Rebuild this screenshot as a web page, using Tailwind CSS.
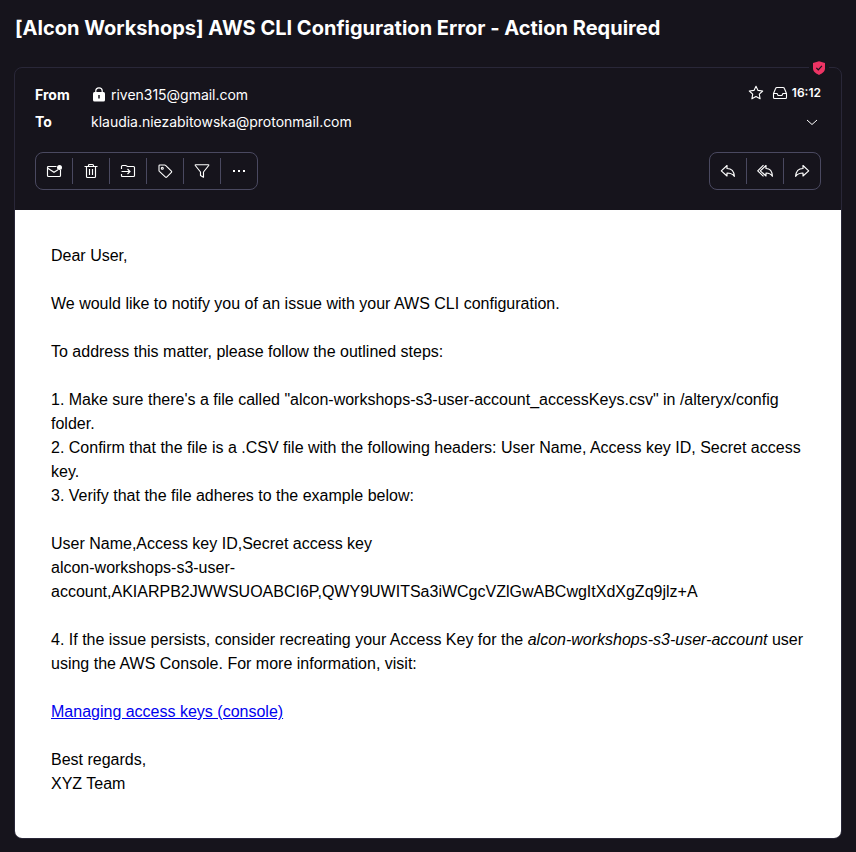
<!DOCTYPE html>
<html lang="en">
<head>
<meta charset="utf-8">
<title>Mail</title>
<script src="https://cdn.jsdelivr.net/npm/@tailwindcss/browser@4"></script>
</head>
<body class="bg-[#16141c] text-white font-['Inter',sans-serif] w-[856px] h-[852px] overflow-hidden">
<main class="pl-[14px] pr-[14px]">
  <h1 class="h-[67px] pt-[13px] pl-px text-[20px] leading-[30px] font-bold whitespace-nowrap tracking-[0.01px]">[Alcon Workshops] AWS CLI Configuration Error - Action Required</h1>
  <article class="relative h-[772px] w-[828px] border border-[#292738] rounded-lg flex flex-col">
    <div class="absolute right-[12px] -top-[8px] w-[20px] h-[16px] bg-[#16141c] flex justify-center">
      <svg class="w-[14px] h-[14px] mt-px" viewBox="0 0 14 14"><path d="M7 .2 13 2v5.600c0 3-2.600 5-6 6.400C3.600 12.600 1 10.600 1 7.600V2z" fill="#ed3464"/><path d="m4.300 6.900 2 1.900 3.600-3.900" fill="none" stroke="#16141c" stroke-width="1.200"/></svg>
    </div>
    <header class="h-[142px] px-[20px] pt-[13px] flex flex-col">
      <div class="flex h-[27px] items-center text-sm leading-[20px]">
        <span class="w-[56px] font-bold">From</span>
        <svg class="w-[16px] h-[16px] mr-[4px]" viewBox="0 0 16 16"><path d="M4.800 6V3.800a3.200 2.900 0 0 1 6.400 0V6" fill="none" stroke="#fff" stroke-width="1.200"/><rect x="2" y="5" width="12" height="9.500" rx="1.500" fill="#fff"/><path d="M8 8v3.500" stroke="#16141c" stroke-width="1.500"/></svg>
        <span class="tracking-[-0.02px]">riven315@gmail.com</span>
        <div class="ml-auto flex items-center h-[20px] -mt-[3px]">
          <svg class="w-[16px] h-[16px] mr-[8px]" viewBox="0 0 16 16" fill="none" stroke="#fff" stroke-width="1.100" stroke-linejoin="round"><path d="m8 1.200 2 4.200 4.700.6-3.400 3.200.8 4.600L8 11.600l-4.100 2.200.8-4.600L1.300 6 6 5.400z"/></svg>
          <svg class="w-[16px] h-[16px] mr-[4px]" viewBox="0 0 16 16" fill="none" stroke="#fff" stroke-width="1.100" stroke-linejoin="round"><path d="M1.500 8.500 3.700 3.300Q4 2.500 5 2.500h6q1 0 1.300.8l2.200 5.200v4q0 1-1 1h-11q-1 0-1-1zh3.600l1 2h3.800l1-2h3.600"/></svg>
          <span class="text-[12px] font-semibold">16:12</span>
        </div>
      </div>
      <div class="flex h-[27px] items-center text-sm leading-[20px]">
        <span class="w-[56px] font-bold">To</span>
        <span class="tracking-[-0.02px]">klaudia.niezabitowska@protonmail.com</span>
        <svg class="w-[16px] h-[16px] ml-auto mr-px" viewBox="0 0 16 16" fill="none" stroke="#fff"><path d="m3 6 5 4.500L13 6"/></svg>
      </div>
      <div class="flex justify-between mt-[17px]">
        <div class="flex h-[38px] items-center border border-[#4a4960] rounded-lg divide-x divide-[#4a4960]">
          <span class="w-[37px] h-[26px] flex items-center justify-center"><svg class="w-[16px] h-[16px]" viewBox="0 0 16 16" fill="none" stroke="#fff" stroke-width="1.150"><path d="M10.500 3.500h-8q-1 0-1 1v8q0 1 1 1h11q1 0 1-1V7M1.800 5.200 8 9.300l4-2.500"/><circle cx="13.500" cy="4.500" r="2.500" fill="#fff" stroke="none"/></svg></span>
          <span class="w-[37px] h-[26px] flex items-center justify-center"><svg class="w-[16px] h-[16px]" viewBox="0 0 16 16" fill="none" stroke="#fff" stroke-width="1.150"><path d="M1.500 3.500h13M5.500 3.500v-1q0-1 1-1h3q1 0 1 1v1M3.500 3.500v10q0 1 1 1h7q1 0 1-1v-10M6.500 6v6M9.500 6v6"/></svg></span>
          <span class="w-[37px] h-[26px] flex items-center justify-center"><svg class="w-[16px] h-[16px]" viewBox="0 0 16 16" fill="none" stroke="#fff" stroke-width="1.150"><path d="M1.500 6V3.500q0-1 1-1h3.300L7.500 3.500h6q1 0 1 1v8q0 1-1 1h-11q-1 0-1-1V11M1.500 8.500h8M7.500 6l2.500 2.500L7.500 11"/></svg></span>
          <span class="w-[37px] h-[26px] flex items-center justify-center"><svg class="w-[16px] h-[16px]" viewBox="0 0 16 16" fill="none" stroke="#fff" stroke-width="1.100" stroke-linejoin="round"><path d="M2 2.800q0-.8.800-.8h4.900q.5 0 .9.400l5.800 5.800q.6.600 0 1.200l-4.700 4.700q-.6.600-1.200 0L2.400 8.300Q2 7.900 2 7.400z"/><circle cx="5.300" cy="5.300" r="1"/></svg></span>
          <span class="w-[37px] h-[26px] flex items-center justify-center"><svg class="w-[16px] h-[16px]" viewBox="0 0 16 16" fill="none" stroke="#fff" stroke-width="1.150" stroke-linejoin="round"><path d="M1.300 2.500q-.3-.8.500-.8h12.400q.8 0 .5.800L9.500 9v5.200l-3-1.700V9z"/></svg></span>
          <span class="w-[36px] h-[26px] flex items-center justify-center"><svg class="w-[16px] h-[16px]" viewBox="0 0 16 16" fill="#fff"><path d="M2 7h2v2H2zM7 7h2v2H7zM12 7h2v2h-2z"/></svg></span>
        </div>
        <div class="flex h-[38px] items-center border border-[#4a4960] rounded-lg divide-x divide-[#4a4960]">
          <span class="w-[37px] h-[26px] flex items-center justify-center"><svg class="w-[16px] h-[16px]" viewBox="0 0 16 16" fill="none" stroke="#fff" stroke-width="1.150" stroke-linejoin="round"><path d="M7 2.500v3c4 0 7 2.500 7.400 7.800-1.600-2.200-4-3.300-7.400-3.300v3L1.300 7.800z"/></svg></span>
          <span class="w-[37px] h-[26px] flex items-center justify-center"><svg class="w-[16px] h-[16px]" viewBox="0 0 16 16" fill="none" stroke="#fff" stroke-width="1.150" stroke-linejoin="round"><path d="M9 2.500v3c3.500 0 6.200 2.500 6.400 7.800-1.300-2.200-3.400-3.300-6.400-3.300v3L3.300 7.800zM6.500 2.200.7 7.800l5.800 5.500"/></svg></span>
          <span class="w-[36px] h-[26px] flex items-center justify-center"><svg class="w-[16px] h-[16px]" viewBox="0 0 16 16" fill="none" stroke="#fff" stroke-width="1.150" stroke-linejoin="round"><path d="M9 2.500v3c-4 0-7 2.500-7.400 7.800C3.200 11.100 5.600 10 9 10v3l5.700-5.200z"/></svg></span>
        </div>
      </div>
    </header>
    <section class="flex-1 bg-white rounded-b-[7px] text-black pt-[34px] pl-[36px] text-[16px] leading-[24px] font-['Liberation_Sans',Arial,sans-serif] whitespace-nowrap">
      <p class="mb-6">Dear User,</p>
      <p class="mb-6">We would like to notify you of an issue with your AWS CLI configuration.</p>
      <p class="mb-6">To address this matter, please follow the outlined steps:</p>
      <p class="mb-6">1. Make sure there's a file called "alcon-workshops-s3-user-account_accessKeys.csv" in /alteryx/config<br>folder.<br>2. Confirm that the file is a .CSV file with the following headers: User Name, Access key ID, Secret access<br>key.<br>3. Verify that the file adheres to the example below:</p>
      <p class="mb-6">User Name,Access key ID,Secret access key<br>alcon-workshops-s3-user-<br>account,AKIARPB2JWWSUOABCI6P,QWY9UWITSa3iWCgcVZlGwABCwgItXdXgZq9jlz+A</p>
      <p class="mb-6">4. If the issue persists, consider recreating your Access Key for the <em>alcon-workshops-s3-user-account</em> user<br>using the AWS Console. For more information, visit:</p>
      <p class="mb-6"><a class="text-[#0000ee] underline">Managing access keys (console)</a></p>
      <p>Best regards,<br>XYZ Team</p>
    </section>
  </article>
</main>
</body>
</html>
